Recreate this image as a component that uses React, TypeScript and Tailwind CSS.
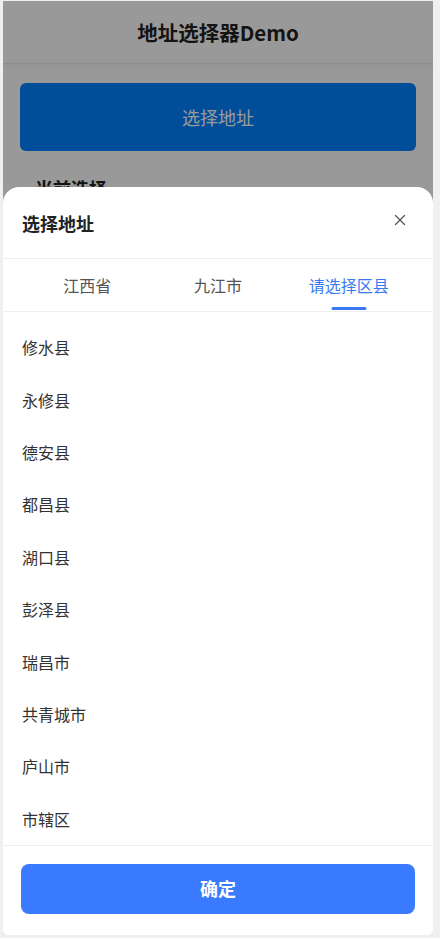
import { X } from "lucide-react";

const districts = [
  "修水县",
  "永修县",
  "德安县",
  "都昌县",
  "湖口县",
  "彭泽县",
  "瑞昌市",
  "共青城市",
  "庐山市",
  "市辖区",
];

const tabs = [
  { label: "江西省", active: false },
  { label: "九江市", active: false },
  { label: "请选择区县", active: true },
];

export default function App() {
  return (
    <div
      className="w-[440px] h-[938px] bg-[#eef0f4] pl-[3px] pt-[1px] overflow-hidden"
      style={{ fontFamily: '"Noto Sans CJK SC", "Noto Sans", sans-serif' }}
    >
      <div className="relative w-[430px] h-[934px] bg-white overflow-hidden rounded-b-[4px]">
        {/* page behind the sheet */}
        <div className="h-[63px] flex items-center justify-center border-b border-[#ececec] shadow-[0_2px_6px_rgba(0,0,0,0.04)]">
          <h1 className="text-[20.5px] font-bold text-[#222]">地址选择器Demo</h1>
        </div>
        <div className="px-[17px] pt-[19px]">
          <button className="w-full h-[68px] rounded-[6px] bg-[#0080ff] text-white text-[18px]">选择地址</button>
          <div className="mt-[24px] pl-[15px] text-[18px] font-bold text-[#222]">当前选择</div>
        </div>

        {/* mask */}
        <div className="absolute inset-0 bg-black/40" />

        {/* bottom sheet */}
        <div className="absolute left-0 right-0 bottom-0 top-[186px] bg-white rounded-t-[16px] flex flex-col">
          <div className="h-[72px] shrink-0 flex items-center justify-between pl-[19px] pr-[24px] pt-[2px] border-b border-[#eeeeee]">
            <span className="text-[18px] font-bold text-[#222]">选择地址</span>
            <X className="w-[18px] h-[18px] text-[#555] -mt-[7px]" strokeWidth={1.6} />
          </div>
          <div className="h-[53px] shrink-0 grid grid-cols-3 px-[19px] border-b border-[#eeeeee]">
            {tabs.map((t) => (
              <div key={t.label} className="relative flex items-center justify-center">
                <span className={t.active ? "text-[16px] text-[#3a7af0]" : "text-[16px] text-[#555]"}>{t.label}</span>
                {t.active && (
                  <span className="absolute bottom-[1px] left-1/2 -translate-x-1/2 w-[35px] h-[3px] rounded-full bg-[#3a7af0]" />
                )}
              </div>
            ))}
          </div>
          <div className="pt-[9px] shrink-0 border-b border-[#eeeeee]">
            {districts.map((d) => (
              <div key={d} className="h-[52.4px] flex items-center pl-[19px] text-[16px] text-[#333]">
                {d}
              </div>
            ))}
          </div>
          <div className="px-[18px] pt-[18px]">
            <button className="w-full h-[50px] rounded-[8px] bg-[#3a7afe] text-white text-[18px] font-bold">确定</button>
          </div>
        </div>
      </div>
    </div>
  );
}
